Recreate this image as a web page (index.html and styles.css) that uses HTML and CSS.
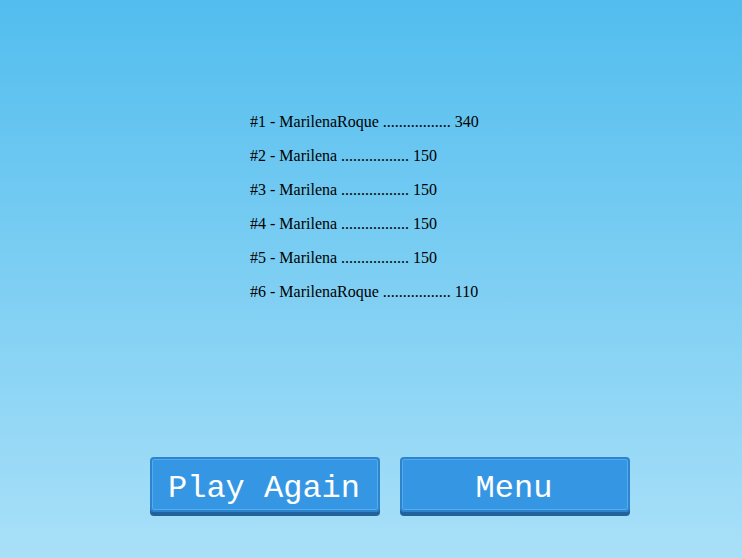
FILE: index.html
```html
<!DOCTYPE html>
<html>
<head>
<meta charset="utf-8">
<link rel="stylesheet" href="styles.css">
</head>
<body>
<div class="screen">
  <ul class="scores">
    <li>#1 - MarilenaRoque ................. 340</li>
    <li>#2 - Marilena ................. 150</li>
    <li>#3 - Marilena ................. 150</li>
    <li>#4 - Marilena ................. 150</li>
    <li>#5 - Marilena ................. 150</li>
    <li>#6 - MarilenaRoque ................. 110</li>
  </ul>
  <div class="actions">
    <button class="btn">Play Again</button>
    <button class="btn">Menu</button>
  </div>
</div>
</body>
</html>
```
FILE: styles.css
```css
html, body {
  margin: 0;
  padding: 0;
  height: 100%;
}
body {
  background: linear-gradient(to bottom, #52bdee 0%, #a9e0f8 100%);
  font-family: "Liberation Serif", serif;
  overflow: hidden;
}
.screen {
  display: flex;
  flex-direction: column;
  height: 558px;
  box-sizing: border-box;
  padding-top: 105px;
}
.scores {
  list-style: none;
  margin: 0 0 0 250px;
  padding: 0;
  font-size: 16px;
  line-height: 34px;
  color: #000;
}
.actions {
  display: flex;
  gap: 20px;
  margin-top: 148px;
  padding-left: 150px;
}
.btn {
  width: 230px;
  height: 55px;
  box-sizing: border-box;
  background: #3597e4;
  border: 2px solid #2e84cc;
  border-radius: 4px;
  box-shadow: inset 0 0 0 1px #52acf0, 0 4px 0 #22629c;
  color: #fff;
  font-family: "Liberation Mono", monospace;
  font-size: 32px;
  padding: 8px 2px 0 0;
  line-height: 1;
}
```
